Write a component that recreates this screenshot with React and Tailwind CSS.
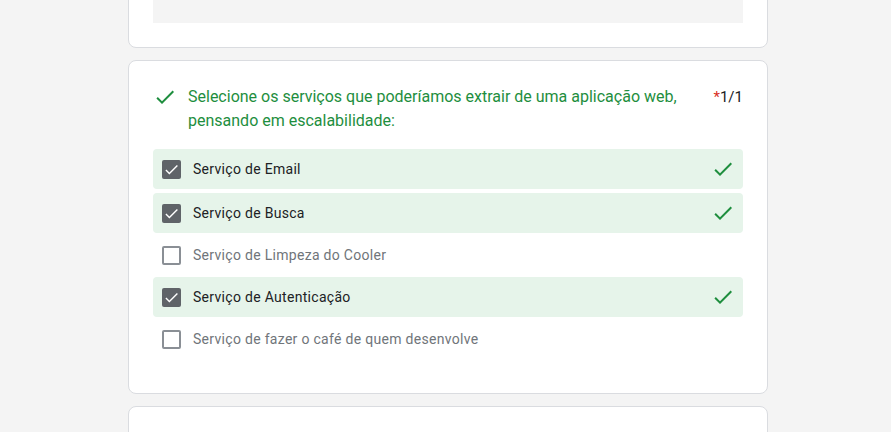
import React from "react";

const Check = ({ className }) => (
  <svg viewBox="0 0 24 24" className={className} fill="currentColor">
    <path d="M9 16.17L4.83 12l-1.42 1.41L9 19 21 7l-1.41-1.41z" />
  </svg>
);

const CheckedBox = () => (
  <div className="w-[19px] h-[19px] rounded-[2px] bg-[#5f6368] flex items-center justify-center shrink-0">
    <svg viewBox="0 0 24 24" className="w-[17px] h-[17px] text-white" fill="currentColor">
      <path d="M9 16.17L4.83 12l-1.42 1.41L9 19 21 7l-1.41-1.41z" />
    </svg>
  </div>
);

const EmptyBox = () => (
  <div className="w-[19px] h-[19px] rounded-[2px] border-2 border-[#8a8f95] shrink-0" />
);

const options = [
  { label: "Serviço de Email", checked: true, mt: "mt-0" },
  { label: "Serviço de Busca", checked: true, mt: "mt-[4px]" },
  { label: "Serviço de Limpeza do Cooler", checked: false, mt: "mt-[2px]" },
  { label: "Serviço de Autenticação", checked: true, mt: "mt-[2px]" },
  { label: "Serviço de fazer o café de quem desenvolve", checked: false, mt: "mt-[2px]" },
];

export default function App() {
  return (
    <div
      className="w-full h-[432px] overflow-hidden bg-[#f4f4f4]"
      style={{ fontFamily: "Roboto, 'Noto Sans', Arial, sans-serif" }}
    >
      <div className="w-[640px] ml-[128px] flex flex-col gap-3 -mt-[62px]">
        {/* Card 1 */}
        <div className="bg-white border border-[#dadce0] rounded-lg px-6 pt-6 pb-6">
          <div className="h-[60px] bg-[#f4f4f4]" />
        </div>

        {/* Card 2 */}
        <div className="bg-white border border-[#dadce0] rounded-lg px-6 pt-6 pb-[34px]">
          <div className="flex items-start">
            <Check className="w-6 h-6 text-[#1e8e3e] shrink-0" />
            <div className="ml-[11px] flex-1 text-[16px] leading-6 text-[#1e8e3e] pr-8">
              Selecione os serviços que poderíamos extrair de uma aplicação web, pensando em escalabilidade:
            </div>
            <div className="text-[15px] leading-6 text-[#202124] shrink-0">
              <span className="text-[#d93025]">*</span>1/1
            </div>
          </div>

          <div className="mt-4 flex flex-col">
            {options.map((o) => (
              <div
                key={o.label}
                className={`${o.mt} h-10 flex items-center rounded pl-[9px] pr-2 ${
                  o.checked ? "bg-[#e6f4ea]" : ""
                }`}
              >
                {o.checked ? <CheckedBox /> : <EmptyBox />}
                <span
                  className={`ml-[12px] text-[14px] tracking-[0.3px] flex-1 ${
                    o.checked ? "text-[#202124]" : "text-[#70757a]"
                  }`}
                >
                  {o.label}
                </span>
                {o.checked && <Check className="w-6 h-6 text-[#1e8e3e]" />}
              </div>
            ))}
          </div>
        </div>

        {/* Card 3 */}
        <div className="bg-white border border-[#dadce0] rounded-lg h-[100px]" />
      </div>
    </div>
  );
}
